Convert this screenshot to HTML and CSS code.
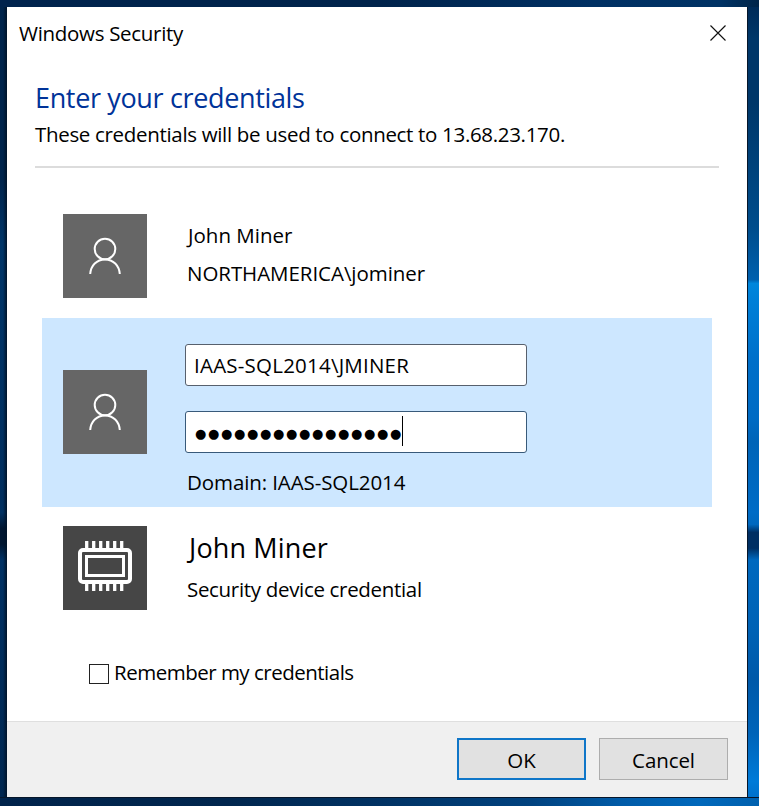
FILE: index.html
```
<!DOCTYPE html>
<html lang="en">
<head>
<meta charset="utf-8">
<title>Windows Security</title>
<link rel="stylesheet" href="styles.css">
</head>
<body>
<div class="desktop">
  <div class="wall-left"></div>
  <div class="wall-top"></div>
  <main class="dialog">
    <header class="titlebar">
      <span class="title">Windows Security</span>
      <svg class="close" width="16" height="16" viewBox="0 0 16 16"><path d="M.5.5l15 15M15.5.5l-15 15" fill="none" stroke="#111" stroke-width="1.15"/></svg>
    </header>
    <section class="intro">
      <h1>Enter your credentials</h1>
      <p>These credentials will be used to connect to 13.68.23.170.</p>
    </section>
    <section class="accounts">
      <div class="account first">
        <div class="avatar">
          <svg width="84" height="84" viewBox="0 0 84 84"><g fill="none" stroke="#fff" stroke-width="2"><circle cx="42" cy="35" r="10.3"/><path d="M27.2 60c.6-8.600 6.600-14.600 14.800-14.600S56.200 51.400 56.800 60"/></g></svg>
        </div>
        <div class="names">
          <span>John Miner</span>
          <span class="login">NORTHAMERICA\jominer</span>
        </div>
      </div>
      <div class="account selected">
        <div class="avatar">
          <svg width="84" height="84" viewBox="0 0 84 84"><g fill="none" stroke="#fff" stroke-width="2"><circle cx="42" cy="35" r="10.3"/><path d="M27.2 60c.6-8.600 6.600-14.600 14.800-14.600S56.200 51.400 56.800 60"/></g></svg>
        </div>
        <div class="fields">
          <div class="field user">IAAS-SQL2014\JMINER</div>
          <div class="field password"><span class="dots">●●●●●●●●●●●●●●●●</span><i class="caret"></i></div>
          <span class="domain">Domain: IAAS-SQL2014</span>
        </div>
      </div>
      <div class="account">
        <div class="avatar chip">
          <svg width="84" height="84" viewBox="0 0 84 84"><g fill="none" stroke="#fff"><rect x="17" y="24" width="50" height="32" rx="3" stroke-width="4"/><rect x="23.500" y="30.500" width="37" height="19" stroke-width="3"/><path d="M23.700 15v8m7 -8v8m7 -8v8m7 -8v8m7 -8v8m7 -8v8M23.700 57v8m7 -8v8m7 -8v8m7 -8v8m7 -8v8m7 -8v8" stroke-width="3.3"/></g></svg>
        </div>
        <div class="names device">
          <span class="big">John Miner</span>
          <span class="kind">Security device credential</span>
        </div>
      </div>
    </section>
    <div class="remember"><span class="box"></span><span>Remember my credentials</span></div>
    <footer class="actions">
      <div class="button primary">OK</div>
      <div class="button">Cancel</div>
    </footer>
  </main>
  <div class="wall-right"></div>
  <div class="wall-bottom"></div>
</div>
</body>
</html>
```
FILE: styles.css
```
* { box-sizing: border-box; }
body { margin: 0; font: 20.5px/30px "Open Sans", "Noto Sans", sans-serif; color: #000; }
.desktop {
  width: 759px; height: 806px; overflow: hidden;
  display: grid; grid-template: 7px 790px 9px / 7px 740px 12px;
  grid-template-areas: "top top top" "left main right" "bottom bottom bottom";
}
.wall-top { grid-area: top; background: linear-gradient(90deg, #00234d 0%, #00234b 50%, #003063 78%, #003264 95%, #002448 100%); }
.wall-left { grid-area: left; background: linear-gradient(90deg, transparent 3px, #001329 7px), linear-gradient(180deg, #00244c 0, #00244c 22%, #003568 30%, #002e5e 62%, #003061 64%, #001631 66%, #001631 68%, #003164 70%, #00264f 100%); }
.wall-right { grid-area: right; border-left: 1px solid #06162a; background: linear-gradient(180deg, #002b58 0, #003769 4%, #003769 12%, #004d8c 28%, #0060ae 34.5%, #0087dc 35%, #0080d8 37%, #006fc9 45%, #006bc4 52%, #0064b8 55%, #006cc6 64%, #0068be 65.500%, #002f63 66.500%, #002f63 68.500%, #0069bf 70%, #0062b5 79%, #0059a9 85%, #0064b9 92%, #007bd8 98%, #0071cc 100%); }
.wall-bottom { grid-area: bottom; border-top: 1px solid #06162a; background: linear-gradient(90deg, #00234b 0, #00264e 30%, #003263 50%, #00427f 70%, #005ba8 82%, #0068bb 92%, #0060ae 100%); }
.dialog { grid-area: main; background: #fff; display: flex; flex-direction: column; }

.titlebar { height: 68px; padding: 11px 21px 0 12px; display: flex; justify-content: space-between; align-items: flex-start; letter-spacing: -.3px; }
.close { margin-top: 7px; }

.intro { height: 93px; margin: 0 28px; border-bottom: 2px solid #dcdcdc; }
h1 { margin: 0; font-size: 27px; line-height: 45px; height: 37px; font-weight: 400; letter-spacing: -.35px; color: #003399; white-space: nowrap; }
.intro p { margin: 0; padding-top: 7px; letter-spacing: -.32px; }

.accounts { height: 478px; padding: 18px 35px 0; }
.account { display: flex; align-items: center; height: 132px; padding-left: 21px; }
.first { padding-top: 8px; }
.avatar { width: 84px; height: 84px; flex: none; background: #666; }
.avatar svg { display: block; }
.selected .avatar { margin-top: -1px; }
.chip { background: #464646; }
.names { margin-left: 41px; display: flex; flex-direction: column; gap: 8px; padding-bottom: 4px; }
.login { letter-spacing: -.05px; margin-left: -1px; }
.selected { height: 189px; background: #cde7ff; }
.fields { margin-left: 38px; padding-top: 16px; width: 342px; }
.field { height: 42px; border: 1px solid #57606d; border-radius: 3px; background: #fff; display: flex; align-items: center; }
.user { padding-left: 8px; letter-spacing: .22px; }
.password { margin-top: 25px; padding-left: 9px; border-color: #385a7a; }
.dots { font: 13px/40px "DejaVu Sans", sans-serif; letter-spacing: 1.65px; white-space: nowrap; padding-top: 4px; }
.caret { width: 1px; height: 30px; background: #000; margin-left: -1px; margin-top: -2px; }
.domain { display: block; margin: 14px 0 0 2px; letter-spacing: -.1px; }
.account:last-child { height: 122px; }
.device { gap: 7px; padding-bottom: 3px; }
.big { font-size: 27px; line-height: 38px; letter-spacing: .15px; margin-left: 1px; }
.kind { letter-spacing: -.32px; margin-left: -1px; }

.remember { height: 75px; padding: 11px 0 0 82px; display: flex; gap: 5px; letter-spacing: -.5px; }
.box { width: 20px; height: 20px; margin-top: 7px; border: 1px solid #222; }

.actions { flex: 1; background: #f0f0f0; border-top: 1px solid #dfdfdf; padding: 16px 19px 0 0; display: flex; justify-content: flex-end; gap: 13px; }
.button { width: 129px; height: 42px; background: #e1e1e1; border: 1px solid #adadad; text-align: center; line-height: 43px; letter-spacing: -.1px; }
.primary { border: 2px solid #0f76c8; line-height: 41px; }
```
